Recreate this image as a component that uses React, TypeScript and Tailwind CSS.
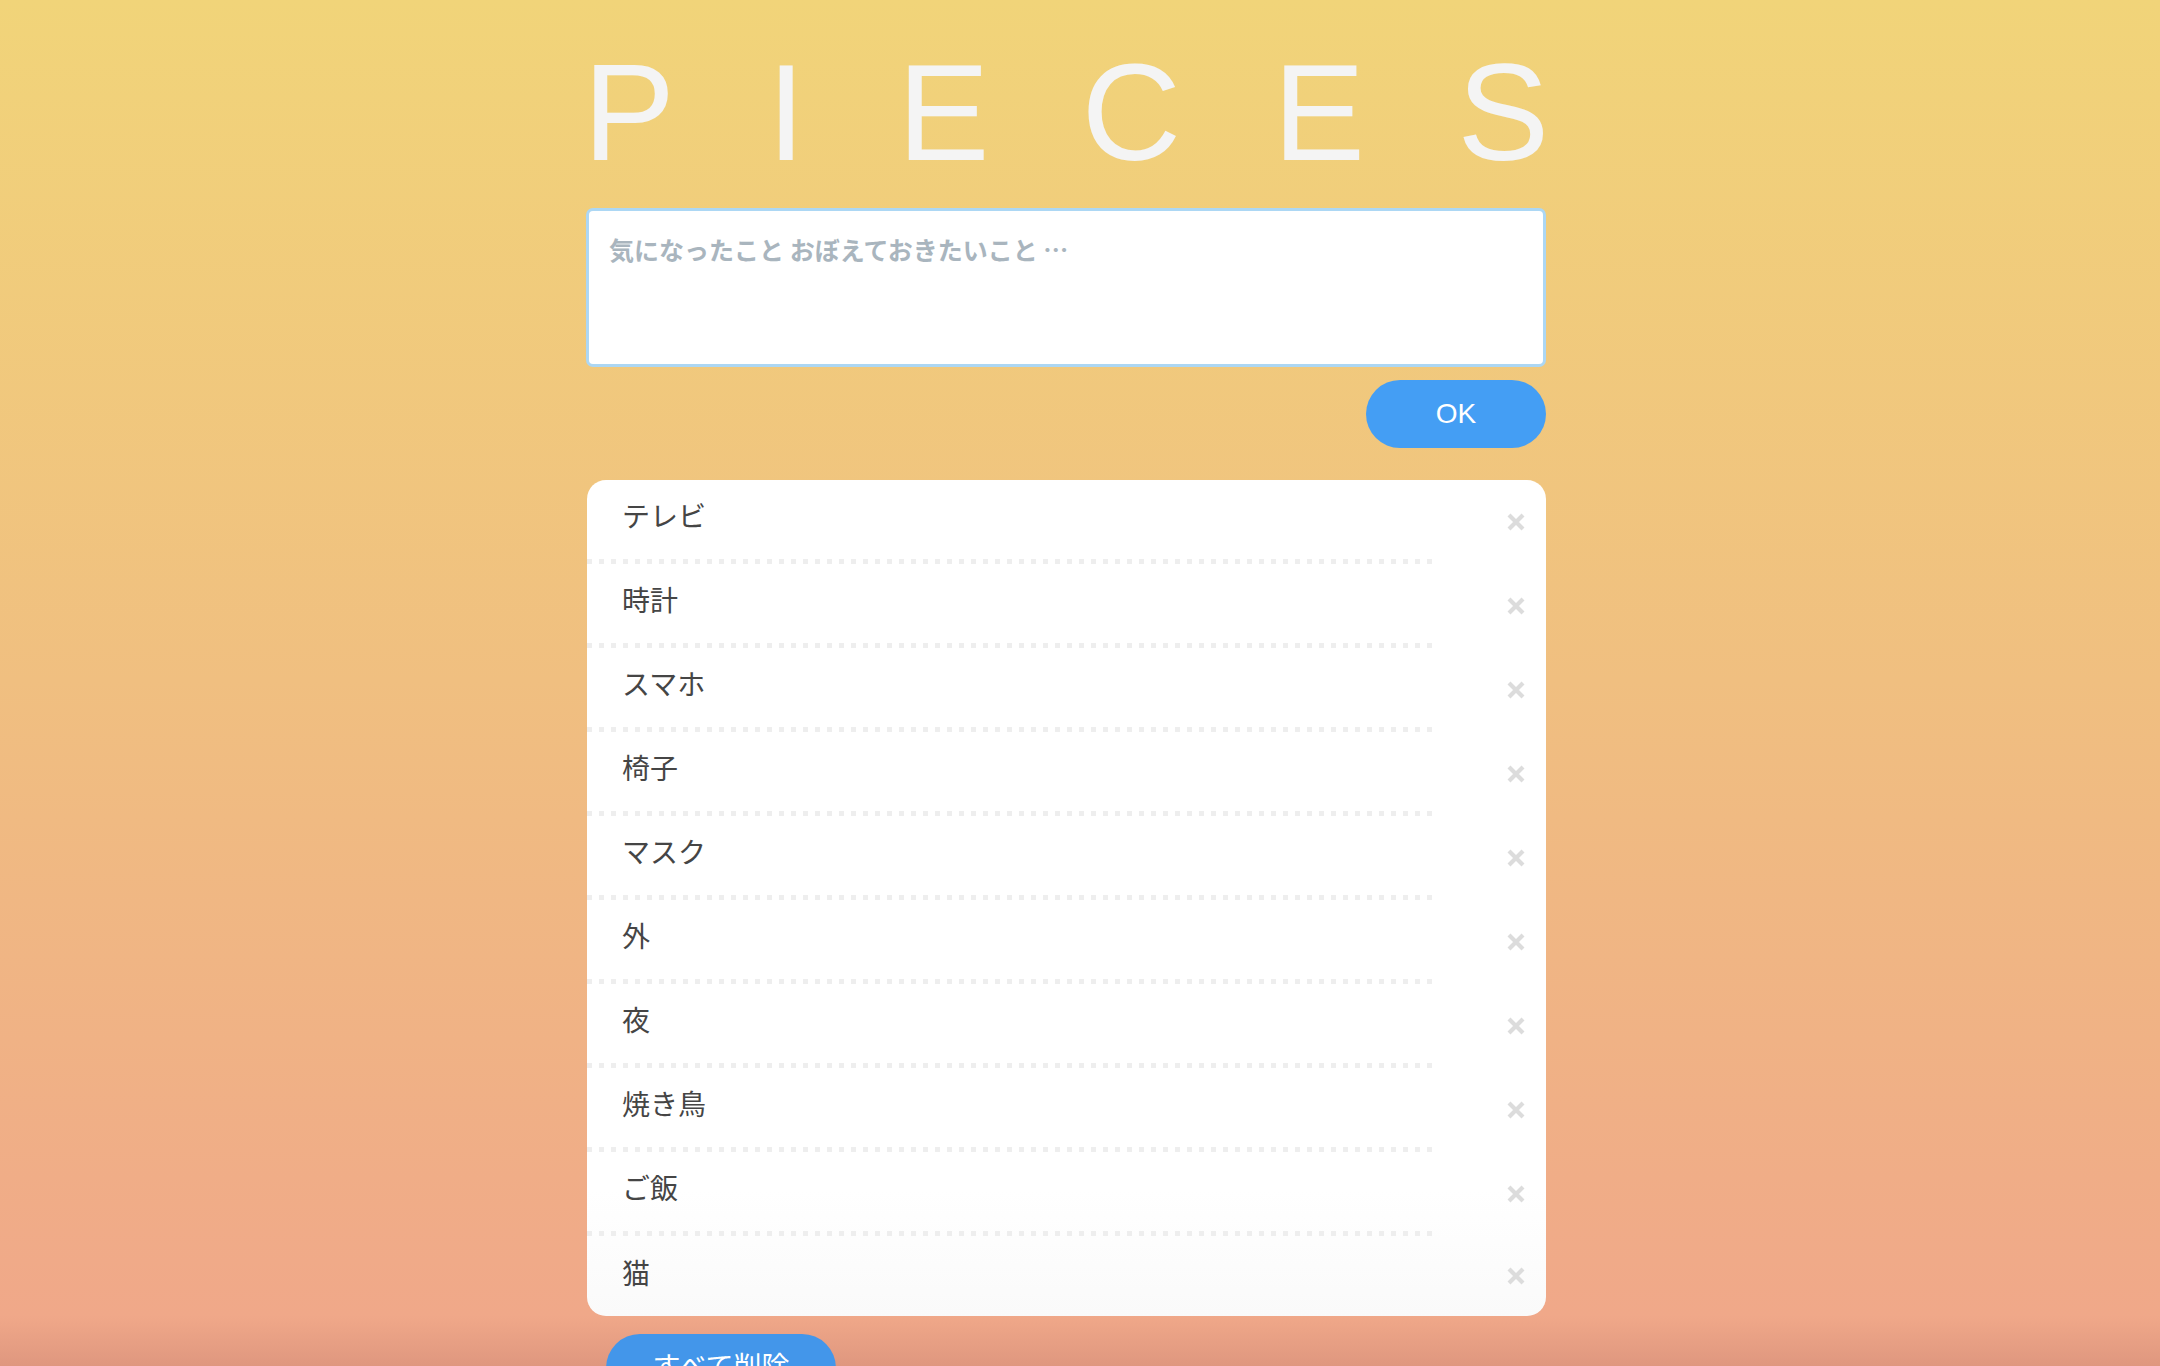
import { useState } from 'react';

const initialPieces = ['テレビ', '時計', 'スマホ', '椅子', 'マスク', '外', '夜', '焼き鳥', 'ご飯', '猫'];

function CloseMark() {
  return (
    <svg width="18" height="18" viewBox="0 0 18 18" className="shrink-0">
      <path d="M2 2 L16 16 M16 2 L2 16" stroke="#dcdcdc" strokeWidth="4.2" fill="none" />
    </svg>
  );
}

export default function App() {
  const [pieces] = useState(initialPieces);
  const [memo, setMemo] = useState('');

  return (
    <div className="min-h-[1366px] flex justify-center pr-[28px] bg-[linear-gradient(to_bottom,#f1d479_0px,#f0bf80_680px,#f0a889_1316px,#df977f_1366px)] font-['Liberation_Sans','Noto_Sans_CJK_JP',sans-serif]">
      <div className="w-[960px] pt-[43px]">
        <h1 className="-ml-[3px] whitespace-nowrap text-[138px] leading-none tracking-[92px] font-normal text-[#f4f4f4]">
          PIECES
        </h1>

        <textarea
          autoFocus
          value={memo}
          onChange={(e) => setMemo(e.target.value)}
          placeholder="気になったこと おぼえておきたいこと …"
          className="mt-[27px] block w-full h-[159px] resize-none rounded-[7px] border-[3px] border-[#acd7f4] bg-white px-[20px] pt-[20px] text-[25px] leading-[1.5] font-bold text-[#333] caret-black outline-none placeholder:text-[#a9b5be] font-['Noto_Sans_CJK_JP','Liberation_Sans',sans-serif]"
        />

        <div className="mt-[13px] flex justify-end">
          <button className="h-[68px] w-[180px] rounded-full bg-[#449ef4] text-[28px] text-white">OK</button>
        </div>

        <ul className="mt-[32px] ml-px overflow-hidden rounded-[19px] bg-[linear-gradient(to_bottom,#ffffff_85%,#fafafa)]">
          {pieces.map((piece, i) => {
            const last = i === pieces.length - 1;
            return (
              <li key={piece} className="flex items-center pr-[21px]">
                <div className="flex-1">
                  <div className={last ? 'flex h-[80px] items-center pl-[35px]' : 'flex h-[79px] items-center pl-[35px]'}>
                    <span className="mb-[3px] text-[28px] leading-none text-[#454545]">{piece}</span>
                  </div>
                  {!last && (
                    <div className="h-[5px] w-[851px] bg-[linear-gradient(to_right,#eeeeee_5px,transparent_5px)] bg-[length:12px_5px] bg-repeat-x" />
                  )}
                </div>
                <CloseMark />
              </li>
            );
          })}
        </ul>

        <div className="mt-[18px] pl-[20px]">
          <button className="h-[68px] w-[230px] rounded-full bg-[#4396ea] text-[28px] text-white">すべて削除</button>
        </div>
      </div>
    </div>
  );
}
